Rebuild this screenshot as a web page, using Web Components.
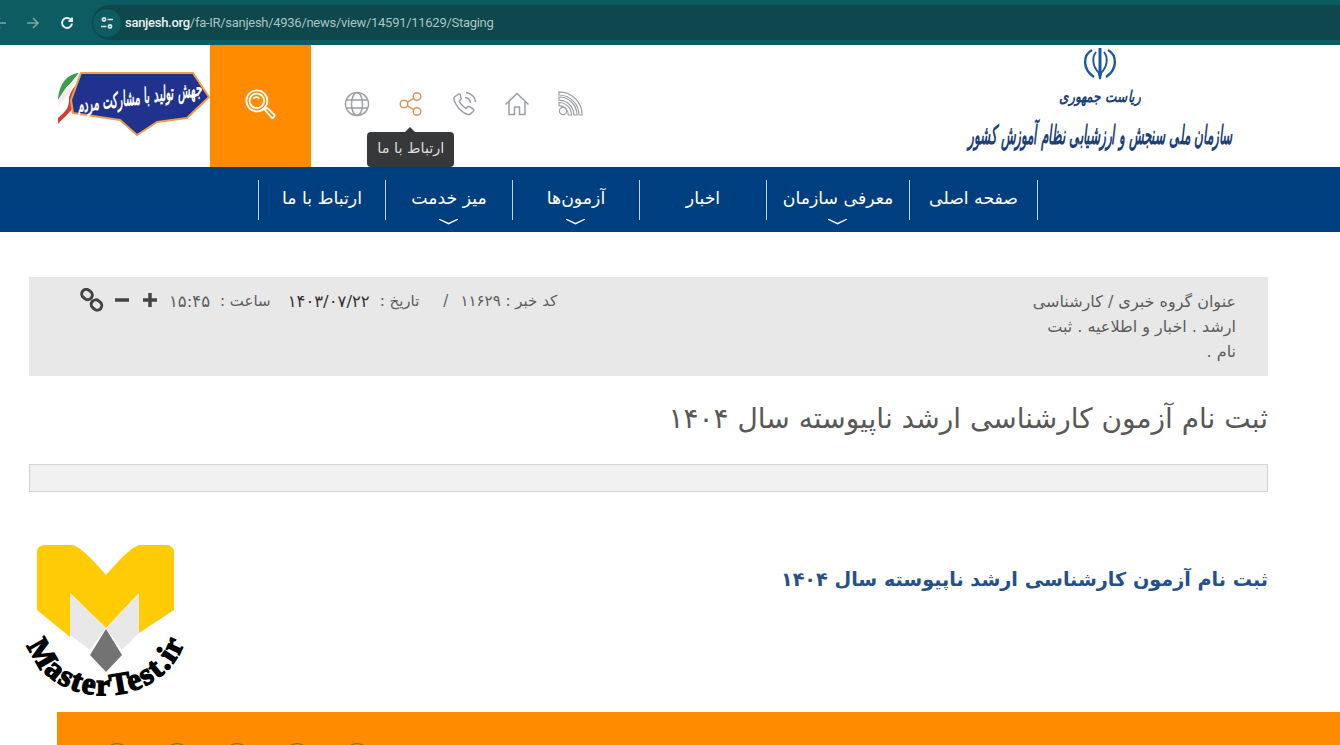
<!DOCTYPE html>
<html lang="fa">
<head>
<meta charset="utf-8">
<title>sanjesh.org</title>
<style>
html, body { margin: 0; height: 745px; overflow: hidden; background: #fff; }
body { font-family: "DejaVu Sans", "Noto Sans", sans-serif; }
</style>
</head>
<body>
<browser-bar></browser-bar>
<site-header></site-header>
<main-nav>
  <nav-item>ارتباط با ما</nav-item>
  <nav-item menu>میز خدمت</nav-item>
  <nav-item menu>آزمون‌ها</nav-item>
  <nav-item>اخبار</nav-item>
  <nav-item menu wide>معرفی سازمان</nav-item>
  <nav-item last>صفحه اصلی</nav-item>
</main-nav>
<news-page></news-page>
<site-footer></site-footer>

<script>
customElements.define(
  "browser-bar",
  class extends HTMLElement {
    constructor() {
      super();
      this.attachShadow({ mode: "open" }).innerHTML = `
<style>
:host { display: flex; align-items: center; height: 45px; background: #0c5c61; color: #a9c4c5; overflow: hidden; font-family: Roboto, sans-serif; }
svg { display: block; flex: none; fill: none; stroke: currentColor; stroke-width: 1.7; }
.nav { margin-left: -7px; color: #7fa3a5; }
.fwd { margin-left: 19px; color: #7fa3a5; }
.reload { margin-left: 20px; color: #e6f0f0; stroke-width: 2; }
.pill { flex: 1; display: flex; align-items: center; height: 35px; margin-left: 18px; background: #0e474c; border-radius: 18px 0 0 18px; }
.tune { display: flex; align-items: center; justify-content: center; width: 28px; height: 28px; margin-left: 1px; border-radius: 50%; background: #0c5c61; color: #dbe8e8; }
.url { margin-left: 4px; font-size: 13px; letter-spacing: -.28px; white-space: nowrap; color: #a9c4c5; }
.url b { font-weight: 500; color: #e9f1f1; }
</style>
<svg class="nav" width="14" height="14" viewBox="0 0 14 14"><path d="M13 7H2M7 2 2 7l5 5"/></svg>
<svg class="fwd" width="14" height="14" viewBox="0 0 14 14"><path d="M1 7h11M7 2l5 5-5 5"/></svg>
<svg class="reload" width="14" height="14" viewBox="0 0 14 14"><path d="M12 7.500A5 5 0 1 1 10.600 3.400L12 5M12 1.500V5H8.500"/></svg>
<div class="pill">
  <span class="tune"><svg width="14" height="14" viewBox="0 0 14 14"><circle cx="4" cy="3.500" r="1.600"/><path d="M7.500 3.500H13M1 10.500h5.500"/><circle cx="10" cy="10.500" r="1.600"/></svg></span>
  <span class="url"><b>sanjesh.org</b>/fa-IR/sanjesh/4936/news/view/14591/11629/Staging</span>
</div>`;
    }
  }
);

const iconPaths = {
  globe: `<circle cx="13" cy="13" r="11.500"/><ellipse cx="13" cy="13" rx="5.500" ry="11.500"/><path d="M2.500 9h21M2.500 17h21"/>`,
  share: `<circle cx="20" cy="5.500" r="3.800"/><circle cx="7" cy="13" r="3.800"/><circle cx="20" cy="20.500" r="3.800"/><path d="M10.300 11.100l6.400-3.700M10.300 14.900l6.400 3.700"/>`,
  phone: `<path d="M7 3.500 3.500 6C2 8 4 13 8 17.500s9 7 11.500 5.500l3-3c.6-.7.4-1.400-.2-1.900l-4-2.600c-.6-.4-1.200-.3-1.700.2l-1.600 1.600c-2-.8-5.500-4.200-6.700-7l1.600-1.700c.4-.5.5-1.100.1-1.700L9.300 3.600C8.700 3 7.800 2.900 7 3.500Z"/><path d="M14 6.500c3 .3 5.200 2.500 5.500 5.500M15 1.500c5 .5 9 4.500 9.500 9.500"/>`,
  home: `<path d="M1.500 13.500 13 2.500l11.500 11M5 11v12.500h5.500V16h5v7.500H21V11"/>`,
  rss: `<circle cx="6" cy="20" r="3.600"/><path d="M2 11.500C9 11.500 14.500 17 14.500 24h-3.200C11.300 18.800 7.200 14.700 2 14.700ZM2 6C12 6 20 14 20 24h-3.200C16.800 15.800 10.200 9.200 2 9.200ZM2 .800C14.800.8 25.200 11.200 25.200 24H22C22 13 13 4 2 4Z"/>`,
};

customElements.define(
  "icon-link",
  class extends HTMLElement {
    constructor() {
      super();
      this.attachShadow({ mode: "open" });
    }

    connectedCallback() {
      const active = this.hasAttribute("active");
      const tip = this.getAttribute("tip");
      this.shadowRoot.innerHTML = `
<style>
:host { position: relative; display: block; width: 26px; height: 26px; }
svg { display: block; fill: none; stroke: ${active ? "#d9975a" : "#9b9fa3"}; stroke-width: ${this.getAttribute("name") === "rss" ? 1.2 : 1.5}; }
.tip { position: absolute; top: 41px; left: -30px; box-sizing: border-box; width: 87px; text-align: center; height: 35px; line-height: 33px; border-radius: 4px; background: #37383a; color: #dcdcdc; font-size: 14.500px; white-space: nowrap; direction: rtl; }
.tip::before { content: ""; position: absolute; top: -5px; left: 38px; border: 5px solid transparent; border-top: 0; border-bottom-color: #37383a; }
</style>
<svg width="26" height="26" viewBox="0 0 26 26">${iconPaths[this.getAttribute("name")]}</svg>
${tip ? `<div class="tip">${tip}</div>` : ""}`;
    }
  }
);

customElements.define(
  "site-header",
  class extends HTMLElement {
    constructor() {
      super();
      this.attachShadow({ mode: "open" }).innerHTML = `
<style>
:host { display: flex; align-items: stretch; height: 122px; padding-left: 57px; background: #fff; }
.campaign { display: block; width: 153px; margin-top: 25px; height: 70px; flex: none; }
.search { width: 101px; flex: none; display: flex; align-items: center; justify-content: center; background: #ff8c00; }
.search svg { margin: 0 0 4px 0; fill: none; stroke: #fff; }
.icons { display: flex; align-items: center; gap: 27.300px; margin: -4px 0 0 33px; flex: none; }
.brand { margin-left: auto; margin-right: 107px; width: 266px; flex: none; display: flex; flex-direction: column; align-items: center; direction: rtl; color: #1c3f78; font-family: "DejaVu Serif", serif; font-style: italic; white-space: nowrap; }
.brand svg { display: block; margin-top: 2px; fill: none; stroke: #1d5a9c; stroke-width: 2.400; }
.brand .a { font-size: 14px; line-height: 22px; margin-top: 4px; font-weight: 700; transform: scale(.87, 1.150); }
.brand .b { font-size: 17.500px; line-height: 30px; letter-spacing: -1.100px; font-weight: 700; margin-top: 13px; transform: scale(.69, 1.500); }
</style>
<svg class="campaign" viewBox="0 0 153 70">
  <path d="M1 30C2 14 10 4 22 3L13 14C8 18 5 24 1 30Z" fill="#3e9b4d"/>
  <path d="M1 30C5 24 8 18 13 14L22 3C28 2 30 2 34 3 22 8 15 15 12 24 8 28 4 32 1 36Z" fill="#f2eeee"/>
  <path d="M1 48C8 42 12 38 12 30 12 20 24 6 44 2 30 10 20 18 20 26 20 38 8 46 1 54Z" fill="#d33b35"/>
  <path d="M24 3H136L152 27 130 48 100 52 80 65 63 50 16 43 14 30Z" fill="#20328d" stroke="#e9a04a" stroke-width="2" stroke-linejoin="round"/>
  <g transform="translate(83 34) rotate(-8) scale(.74 1.500)">
    <text fill="#fff" font-family="DejaVu Serif" font-style="italic" font-weight="700" font-size="14" text-anchor="middle" direction="rtl" letter-spacing="-.6">جهش تولید با مشارکت مردم</text>
  </g>
</svg>
<div class="search">
  <svg width="31" height="31" viewBox="0 0 34 34" stroke-width="2">
    <circle cx="13" cy="13" r="11.500"/><circle cx="13" cy="13" r="8"/><path d="M9 10.500a5 5 0 0 1 7 0"/>
    <path d="m21.500 22.500 3-1.800 7.500 7.300c1.400 1.600-1.300 4.700-3 3.200Z"/>
  </svg>
</div>
<div class="icons">
  <icon-link name="globe"></icon-link>
  <icon-link name="share" active tip="ارتباط با ما"></icon-link>
  <icon-link name="phone"></icon-link>
  <icon-link name="home"></icon-link>
  <icon-link name="rss"></icon-link>
</div>
<div class="brand">
  <svg width="38" height="34" viewBox="0 0 38 34">
    <path d="M11 3C2 8 1 22 13 30M27 3c9 5 10 19-2 27"/>
    <path d="M15 5C11 10 11 19 18 26L19 32 20 26C27 19 27 10 23 5" stroke-width="2"/>
    <path d="M19 1v28" stroke-width="3"/>
  </svg>
  <div class="a">ریاست جمهوری</div>
  <div class="b">سازمان ملی سنجش و ارزشیابی نظام آموزش کشور</div>
</div>`;
    }
  }
);

customElements.define(
  "main-nav",
  class extends HTMLElement {
    constructor() {
      super();
      this.attachShadow({ mode: "open" }).innerHTML = `
<style>
:host { display: flex; align-items: center; height: 65px; padding-left: 258px; background: #003f7f; }
.end { width: 1px; height: 40px; background: #c6d3e0; }
</style>
<slot></slot><div class="end"></div>`;
    }
  }
);

customElements.define(
  "nav-item",
  class extends HTMLElement {
    constructor() {
      super();
      this.attachShadow({ mode: "open" }).innerHTML = `
<style>
:host { position: relative; display: flex; align-items: center; justify-content: center; box-sizing: border-box; width: 127px; height: 40px; padding-bottom: 3px; border-left: 1px solid #c6d3e0; color: #fff; font-size: 17.300px; direction: rtl; white-space: nowrap; }
:host([wide]) { width: 143px; }
:host([last]) { width: 128px; }
:host([menu])::after { content: ""; position: absolute; left: 50%; bottom: -5px; width: 19px; height: 6px; margin-left: -10px; background: #fff; clip-path: polygon(0 0, 50% 70%, 100% 0, 100% 20%, 50% 100%, 0 20%); }
</style>
<slot></slot>`;
    }
  }
);

customElements.define(
  "info-bar",
  class extends HTMLElement {
    constructor() {
      super();
      this.attachShadow({ mode: "open" }).innerHTML = `
<style>
:host { display: flex; justify-content: space-between; box-sizing: border-box; height: 99px; padding: 12px 32px 0 51px; background: #e8e8e8; color: #5d5d5d; font-size: 16px; line-height: 25px; direction: rtl; }
.group { width: 205px; }
.meta { display: flex; align-items: flex-start; white-space: nowrap; font-size: 15px; }
.sep { margin: 0 12px 0 24px; }
.date { color: #333; margin-right: 10px; font-size: 16.500px; }
.time { margin-right: 10px; font-size: 16.500px; }
.tools { display: flex; align-items: center; height: 22px; margin-right: 12px; }
svg { display: block; fill: none; stroke: #444; flex: none; }
</style>
<div class="group">عنوان گروه خبری / کارشناسی ارشد . اخبار و اطلاعیه . ثبت نام .</div>
<div class="meta">
  <span>کد خبر : ۱۱۶۲۹</span><span class="sep">/</span>
  <span>تاریخ :</span><span class="date">۱۴۰۳/۰۷/۲۲</span>
  <span style="margin-right:17px">ساعت :</span><span class="time">۱۵:۴۵</span>
  <div class="tools">
    <svg width="14" height="14" viewBox="0 0 14 14" stroke-width="3.500" style="margin-left:14px"><path d="M7 0v14M0 7h14"/></svg>
    <svg width="14" height="14" viewBox="0 0 14 14" stroke-width="3.500" style="margin-left:11px"><path d="M0 7h14"/></svg>
    <svg width="24" height="24" viewBox="0 0 24 24" stroke-width="3"><rect x="1.500" y="2" width="11" height="9" rx="4.500" transform="rotate(40 7 6.500)"/><rect x="11" y="12.500" width="11" height="9" rx="4.500" transform="rotate(40 16.500 17)"/></svg>
  </div>
</div>`;
    }
  }
);

customElements.define(
  "master-logo",
  class extends HTMLElement {
    constructor() {
      super();
      this.attachShadow({ mode: "open" }).innerHTML = `
<style>
:host { display: block; width: 170px; height: 156px; }
svg { display: block; overflow: visible; }
text { font-family: "Liberation Serif", serif; font-weight: 700; font-size: 31px; fill: #000; stroke: #000; stroke-width: 1.400; }
</style>
<svg width="170" height="156" viewBox="0 0 170 156">
  <path d="M15 8Q15 0 23 0H50Q58 0 84 30 110 0 118 0H144Q152 0 152 8V65L117 88V48L84 83 48 48V92L15 65Z" fill="#ffcb05"/>
  <path d="M48 48 84 83 68 105 48 90Z" fill="#e8e8e8"/>
  <path d="M117 48 84 83 100 105 117 88Z" fill="#e8e8e8"/>
  <path d="M84 84 100 110 84 127 68 110Z" fill="#737373"/>
  <defs><path id="arc" d="M5 98C25 168 140 168 163 96"/></defs>
  <text><textPath href="#arc" startOffset="50%" text-anchor="middle" textLength="200" lengthAdjust="spacing">MasterTest.ir</textPath></text>
</svg>`;
    }
  }
);

customElements.define(
  "news-page",
  class extends HTMLElement {
    constructor() {
      super();
      this.attachShadow({ mode: "open" }).innerHTML = `
<style>
:host { display: block; box-sizing: border-box; width: 1239px; height: 480px; margin-left: 29px; padding-top: 45px; }
h1 { margin: 25px 0 0; height: 38px; line-height: 36px; color: #585858; font-size: 28px; font-weight: 400; direction: rtl; white-space: nowrap; }
.empty { height: 28px; margin-top: 25px; box-sizing: border-box; border: 1px solid #d3d3d3; background: #f1f1f1; }
.body { display: flex; justify-content: space-between; margin-top: 53px; }
h2 { margin: 20px 0 0; line-height: 30px; color: #25508a; font-size: 19.200px; font-weight: 700; direction: rtl; white-space: nowrap; }
master-logo { margin-left: -7px; }
</style>
<info-bar></info-bar>
<h1>ثبت نام آزمون کارشناسی ارشد ناپیوسته سال ۱۴۰۴</h1>
<div class="empty"></div>
<div class="body">
  <master-logo></master-logo>
  <h2>ثبت نام آزمون کارشناسی ارشد ناپیوسته سال ۱۴۰۴</h2>
</div>`;
    }
  }
);

customElements.define(
  "site-footer",
  class extends HTMLElement {
    constructor() {
      super();
      this.attachShadow({ mode: "open" }).innerHTML = `
<style>
:host { display: flex; gap: 32px; box-sizing: border-box; height: 60px; margin-left: 57px; padding: 31px 0 0 46px; background: #ff8c00; }
span { width: 28px; height: 28px; flex: none; box-sizing: border-box; border: 1px solid #7d6a50; border-radius: 50%; }
</style>
<span></span><span></span><span></span><span></span><span></span>`;
    }
  }
);
</script>
</body>
</html>
